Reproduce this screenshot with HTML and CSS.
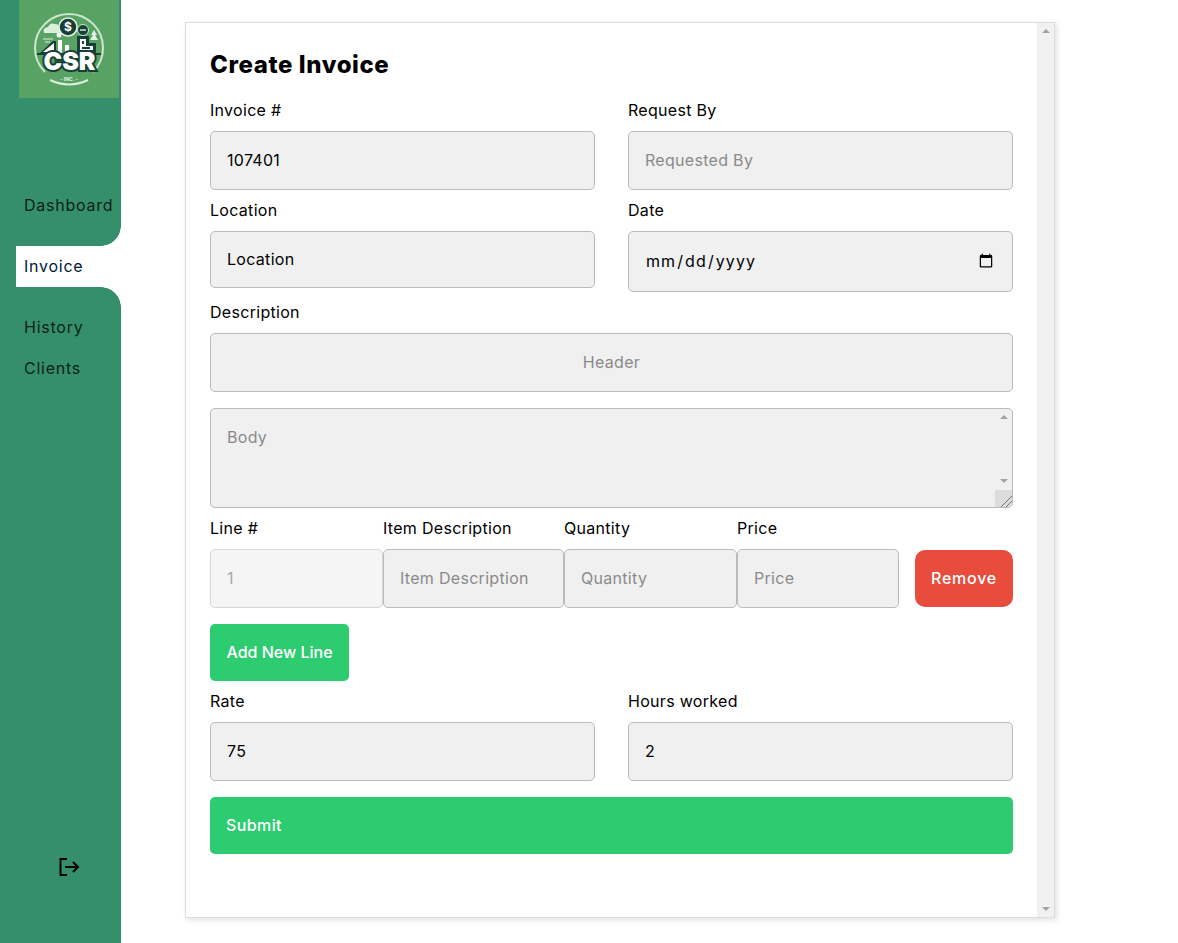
FILE: index.html
```html
<!DOCTYPE html>
<html lang="en">
<head>
    <meta charset="UTF-8">
    <title>Create Invoice</title>
    <link rel="stylesheet" href="styles.css">
</head>
<body>
    <aside class="sidebar">
        <div class="logo">
            <svg width="100" height="98" viewBox="0 0 100 98">
                <rect width="100" height="98" fill="#58a264"/>
                <path d="M26 72 A34 34 0 1 1 74 72" fill="none" stroke="#cfe6cf" stroke-width="2"/>
                <path d="M31 80 Q50 89 69 80" fill="none" stroke="#dcefdc" stroke-width="2"/>
                <!-- cloud -->
                <path d="M25 33 q-2 -5 4 -6 q2 -5 7 -3 q5 0 4 5 q3 3 -1 4z" fill="#dcefdc"/>
                <!-- coins and tree -->
                <circle cx="49" cy="27" r="9" fill="#173f36" stroke="#e4f1e4" stroke-width="1.5"/>
                <text x="49" y="31" class="logo-coin">$</text>
                <circle cx="64" cy="30" r="5.5" fill="#173f36" stroke="#cfe6cf"/>
                <path d="M61 30h6" stroke="#cfe6cf" stroke-width="1.5"/>
                <path d="M75 30 l-3 5 h2 l-3 5 h8 l-3 -5 h2z" fill="#e4f1e4"/>
                <!-- bars on the left -->
                <circle cx="40" cy="35" r="2.5" fill="#fff"/>
                <path d="M21 53 L34 41 H37 V53z" fill="#173f36"/>
                <path d="M24 52 L35 43 V52z M39 53 V40 H43 V53z M46 53 V45 H50 V53z" fill="#fff"/>
                <path d="M24 39 H34 M26 42 H31" stroke="#dcefdc"/>
                <!-- building on the right -->
                <path d="M58 36 H70 V43 H77 V53 H58z" fill="#173f36"/>
                <path d="M61 39 H67 V46 H74 V50 H61z" fill="#fff"/>
                <path d="M63 41 H65 V44 H63z M63 47 H71 V49 H63z" fill="#173f36"/>
                <path d="M18 54 H82" stroke="#173f36" stroke-width="2"/>
                <text x="50.5" y="70" class="logo-name">CSR</text>
                <text x="50" y="81" class="logo-inc">- INC. -</text>
            </svg>
        </div>
        <nav class="menu">
            <a class="menu-item" href="#">Dashboard</a>
            <a class="menu-item active" href="#">Invoice</a>
            <a class="menu-item" href="#">History</a>
            <a class="menu-item" href="#">Clients</a>
        </nav>
        <a class="logout" href="#">
            <svg width="22" height="20" viewBox="0 0 22 20" fill="none" stroke="#000" stroke-width="2">
                <path d="M9 2H2.5V18H9"/>
                <path d="M7 10H20M15 5l5 5-5 5"/>
            </svg>
        </a>
    </aside>

    <main class="content">
        <div class="card">
            <div class="card-body">
                <h2 class="title">Create Invoice</h2>
                <form>
                    <div class="row-2">
                        <div class="field">
                            <label>Invoice #</label>
                            <input class="input" type="text" value="107401">
                        </div>
                        <div class="field">
                            <label>Request By</label>
                            <input class="input" type="text" placeholder="Requested By">
                        </div>
                    </div>
                    <div class="row-2">
                        <div class="field">
                            <label>Location</label>
                            <input class="input short" type="text" value="Location">
                        </div>
                        <div class="field">
                            <label>Date</label>
                            <input class="input date" type="date">
                        </div>
                    </div>
                    <div class="field">
                        <label>Description</label>
                        <input class="input center" type="text" placeholder="Header">
                    </div>
                    <div class="body-wrap">
                        <textarea class="input body-text" placeholder="Body"></textarea>
                        <span class="arrow arrow-up ta-up"></span>
                        <span class="arrow arrow-down ta-down"></span>
                        <span class="ta-corner"></span>
                    </div>
                    <div class="line-row">
                        <div class="field">
                            <label>Line #</label>
                            <input class="input" type="text" placeholder="1" disabled>
                        </div>
                        <div class="field">
                            <label>Item Description</label>
                            <input class="input" type="text" placeholder="Item Description">
                        </div>
                        <div class="field">
                            <label>Quantity</label>
                            <input class="input" type="text" placeholder="Quantity">
                        </div>
                        <div class="field">
                            <label>Price</label>
                            <input class="input" type="text" placeholder="Price">
                        </div>
                        <button class="btn btn-remove" type="button">Remove</button>
                    </div>
                    <button class="btn btn-add" type="button">Add New Line</button>
                    <div class="row-2">
                        <div class="field">
                            <label>Rate</label>
                            <input class="input" type="text" value="75">
                        </div>
                        <div class="field">
                            <label>Hours worked</label>
                            <input class="input" type="text" value="2">
                        </div>
                    </div>
                    <button class="btn btn-submit" type="submit">Submit</button>
                </form>
            </div>
            <div class="scrollbar">
                <span class="arrow arrow-up"></span>
                <span class="arrow arrow-down"></span>
            </div>
        </div>
    </main>
</body>
</html>
```

FILE: styles.css
```css
* {
    box-sizing: border-box;
}
body {
    margin: 0;
    height: 100vh;
    display: flex;
    overflow: hidden;
    background: #fff;
    color: #000;
    font-family: "Inter", "Liberation Sans", sans-serif;
    font-size: 16px;
    letter-spacing: .3px;
}

/* sidebar */
.sidebar {
    width: 121px;
    flex: none;
    display: flex;
    flex-direction: column;
    background: #358f6c;
}
.logo {
    margin-left: 19px;
    width: 100px;
    height: 98px;
}
.logo svg {
    display: block;
}
.logo-coin {
    font: bold 12px "Inter", sans-serif;
    fill: #fff;
    text-anchor: middle;
}
.logo-name {
    font: 900 25px "Inter", sans-serif;
    letter-spacing: 0;
    fill: #fff;
    stroke: #173f36;
    stroke-width: 4px;
    paint-order: stroke;
    text-anchor: middle;
}
.logo-inc {
    font: bold 5px "Inter", sans-serif;
    letter-spacing: 0;
    fill: #e4f1e4;
    text-anchor: middle;
}
.menu {
    margin-top: 87px;
    padding-left: 16px;
    display: flex;
    flex-direction: column;
}
.menu-item {
    display: block;
    height: 41px;
    line-height: 41px;
    padding-left: 8px;
    color: #0b1f18;
    letter-spacing: .75px;
    text-decoration: none;
    white-space: nowrap;
}
.menu-item.active {
    position: relative;
    margin: 20px 0;
    background: #fff;
    color: #001a33;
}
.menu-item.active::before,
.menu-item.active::after {
    content: "";
    position: absolute;
    right: 0;
    width: 20px;
    height: 20px;
}
.menu-item.active::before {
    top: -20px;
    background: radial-gradient(circle at 0 0, transparent 19.5px, #fff 20px);
}
.menu-item.active::after {
    bottom: -20px;
    background: radial-gradient(circle at 0 100%, transparent 19.5px, #fff 20px);
}
.logout {
    margin: auto 0 66px 58px;
    display: block;
    height: 20px;
}
.logout svg {
    display: block;
}

/* main card */
.content {
    flex: 1;
    padding: 22px 0 0 64px;
}
.card {
    width: 870px;
    height: 896px;
    display: flex;
    border: 1px solid #ddd;
    box-shadow: 2px 2px 5px rgba(0, 0, 0, .12);
}
.card-body {
    flex: 1;
    padding: 24px 24px 0;
}
.scrollbar {
    width: 17px;
    flex: none;
    display: flex;
    flex-direction: column;
    justify-content: space-between;
    align-items: center;
    padding: 6px 0;
    background: #f1f1f1;
}
.arrow {
    display: block;
    width: 0;
    height: 0;
    border-left: 4px solid transparent;
    border-right: 4px solid transparent;
}
.arrow-up {
    border-bottom: 4px solid #a3a3a3;
}
.arrow-down {
    border-top: 4px solid #a3a3a3;
}
.title {
    margin: 0 0 15px;
    font-size: 24px;
    line-height: 36px;
    font-weight: 800;
    letter-spacing: .6px;
}

/* form */
.row-2 {
    display: grid;
    grid-template-columns: 385px 385px;
    column-gap: 33px;
    margin-bottom: 8px;
}
.field {
    display: flex;
    flex-direction: column;
    align-items: stretch;
}
.field label {
    line-height: 24px;
    margin-bottom: 9px;
    white-space: nowrap;
}
.input {
    display: block;
    width: 100%;
    height: 59px;
    padding: 0 16px 2px;
    border: 1px solid #bbb;
    border-radius: 5px;
    background: #f0f0f0;
    color: #000;
    font: inherit;
    letter-spacing: inherit;
}
.input::placeholder {
    color: #8a8a8a;
    opacity: 1;
}
.input:disabled {
    background: #f5f5f5;
    border-color: #d6d6d6;
}
.input:disabled::placeholder {
    color: #a8a8a8;
}
.input.short {
    height: 57px;
}
.input.date {
    height: 61px;
    letter-spacing: 1.1px;
}
.input.center {
    text-align: center;
}
.body-wrap {
    position: relative;
    margin: 16px 0 8px;
    height: 100px;
}
.body-text {
    height: 100px;
    padding: 16px;
    line-height: 24px;
}
.ta-up,
.ta-down {
    position: absolute;
    right: 5px;
}
.ta-up {
    top: 7px;
}
.ta-down {
    bottom: 25px;
}
/* grey square under the textarea's resize grip */
.ta-corner {
    position: absolute;
    right: 1px;
    bottom: 1px;
    width: 17px;
    height: 17px;
    background: #dcdcdc;
    border-bottom-right-radius: 4px;
    pointer-events: none;
}
.ta-corner::after {
    content: "";
    position: absolute;
    inset: 0;
    background: linear-gradient(135deg, transparent 65%, #777 65%, #777 68%, transparent 68%, transparent 81%, #777 81%, #777 84%, transparent 84%);
}
.line-row {
    display: grid;
    grid-template-columns: 173px 181px 173px 162px 114px;
    margin-bottom: 16px;
}
.btn {
    display: block;
    border: none;
    color: #fff;
    font: inherit;
    font-weight: 500;
    letter-spacing: .4px;
    height: 57px;
    padding: 0 16px 2px;
    cursor: pointer;
}
.btn-remove {
    align-self: end;
    margin: 0 0 1px 16px;
    width: 98px;
    padding: 0 0 2px;
    border-radius: 10px;
    background: #e74c3c;
    letter-spacing: .75px;
}
.btn-add {
    width: 139px;
    margin-bottom: 8px;
    border-radius: 5px;
    background: #2ecc71;
    letter-spacing: 0;
    white-space: nowrap;
}
.btn-submit {
    width: 100%;
    margin-top: 16px;
    border-radius: 5px;
    background: #2ecc71;
    text-align: left;
}
```
